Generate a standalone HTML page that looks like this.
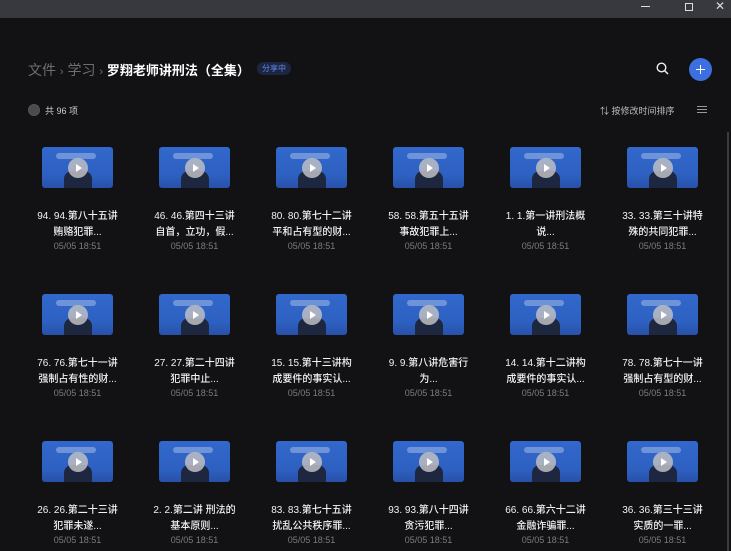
<!DOCTYPE html>
<html><head><meta charset="utf-8"><style>
*{margin:0;padding:0;box-sizing:border-box}
body{width:731px;height:551px;background:#121215;font-family:"Liberation Sans","Noto Sans CJK SC",sans-serif;position:relative;overflow:hidden;color:#fff}
.tb{position:absolute;left:0;top:0;width:731px;height:18px;background:#38393e}
.abs{position:absolute}
.item{position:absolute;width:117px;text-align:center}
.th{position:absolute;left:0;top:0;width:71px;height:41px;border-radius:3px;background:linear-gradient(180deg,#3268cc 0%,#2d60c0 70%,#2850a8 100%);overflow:hidden}
.th .p{position:absolute;left:22px;top:24px;width:28px;height:17px;background:#1e2740;border-radius:8px 8px 0 0}
.th .lg{position:absolute;left:14px;top:6px;width:40px;height:6px;background:rgba(255,255,255,.3);border-radius:3px}
.th .c{position:absolute;left:26px;top:11px;width:20px;height:20px;border-radius:50%;background:rgba(190,190,195,.85)}
.th .c:after{content:"";position:absolute;left:8px;top:6px;border-left:6px solid #fff;border-top:4px solid transparent;border-bottom:4px solid transparent}
.t{position:absolute;top:62px;left:-23px;width:117px;font-size:10px;line-height:16px;color:#f2f2f2;font-weight:500}
.d{position:absolute;top:94px;left:-23px;width:117px;font-size:9px;color:#7c7c80}
</style></head><body>
<div class="tb"></div>
<div class="abs" style="left:641px;top:6px;width:9px;height:1px;background:#ddd"></div>
<div class="abs" style="left:685px;top:3px;width:8px;height:8px;border:1px solid #ddd"></div>
<div class="abs" style="left:715px;top:-1px;font-size:12px;color:#ddd">✕</div>
<div class="abs" style="left:28px;top:60px;font-size:14px;color:#6e6e72;white-space:nowrap">文件 <span style="font-size:11px">›</span> 学习 <span style="font-size:11px">›</span> <b style="color:#fff;font-size:13px">罗翔老师讲刑法（全集）</b></div>
<div class="abs" style="left:257px;top:62px;width:34px;height:13px;border-radius:7px;background:#1e2540;color:#5f85ea;font-size:8px;line-height:13px;text-align:center">分享中</div>
<svg class="abs" style="left:656px;top:62px" width="14" height="14"><circle cx="5.5" cy="5.5" r="4.3" fill="none" stroke="#eee" stroke-width="1.4"/><line x1="8.6" y1="8.6" x2="12" y2="12" stroke="#eee" stroke-width="1.5"/></svg>
<div class="abs" style="left:689px;top:58px;width:23px;height:23px;border-radius:50%;background:#3e6fe0"></div>
<div class="abs" style="left:696px;top:69px;width:9px;height:1.3px;background:#fff"></div>
<div class="abs" style="left:700px;top:65px;width:1.3px;height:9px;background:#fff"></div>
<div class="abs" style="left:28px;top:104px;width:12px;height:12px;border-radius:50%;background:#4a4a50;border:1px solid #555"></div>
<div class="abs" style="left:45px;top:104px;font-size:9px;color:#cfcfd2">共 96 项</div>
<div class="abs" style="left:600px;top:104px;font-size:9px;color:#bbb">⇅ 按修改时间排序</div>
<div class="abs" style="left:697px;top:106px;width:10px;height:1px;background:#999;box-shadow:0 3px 0 #999,0 6px 0 #999"></div>
<div class="abs" style="left:727px;top:132px;width:2px;height:419px;background:#3a3a3e"></div>
<div id="g"></div>
<script>
var T=[["94. 94.第八十五讲","贿赂犯罪..."],["46. 46.第四十三讲","自首，立功，假..."],["80. 80.第七十二讲","平和占有型的财..."],["58. 58.第五十五讲","事故犯罪上..."],["1. 1.第一讲刑法概","说..."],["33. 33.第三十讲特","殊的共同犯罪..."],
["76. 76.第七十一讲","强制占有性的财..."],["27. 27.第二十四讲","犯罪中止..."],["15. 15.第十三讲构","成要件的事实认..."],["9. 9.第八讲危害行","为..."],["14. 14.第十二讲构","成要件的事实认..."],["78. 78.第七十一讲","强制占有型的财..."],
["26. 26.第二十三讲","犯罪未遂..."],["2. 2.第二讲 刑法的","基本原则..."],["83. 83.第七十五讲","扰乱公共秩序罪..."],["93. 93.第八十四讲","贪污犯罪..."],["66. 66.第六十二讲","金融诈骗罪..."],["36. 36.第三十三讲","实质的一罪..."]];
var h="";for(var i=0;i<18;i++){var c=i%6,r=Math.floor(i/6);var x=42+c*117,y=147+r*147;
h+='<div class="item" style="left:'+x+'px;top:'+y+'px;width:71px"><div class="th"><div class="lg"></div><div class="p"></div><div class="c"></div></div><div class="t">'+T[i][0]+'<br>'+T[i][1]+'</div><div class="d">05/05 18:51</div></div>';}
document.getElementById("g").innerHTML=h;
</script>
</body></html>
